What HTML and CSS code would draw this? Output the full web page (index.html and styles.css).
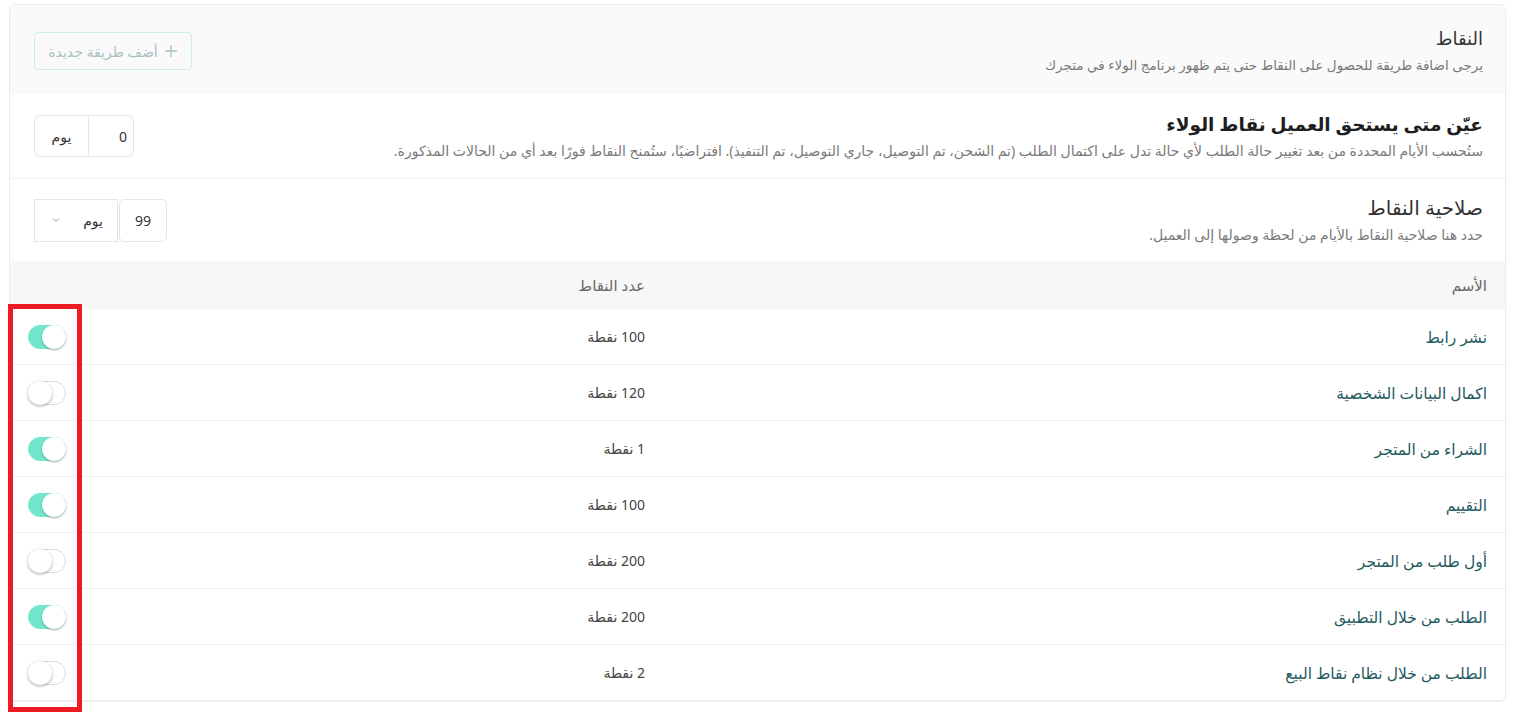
FILE: index.html
```html
<!DOCTYPE html>
<html lang="ar" dir="rtl">
<head>
    <meta charset="UTF-8">
    <title>النقاط</title>

    <link rel="stylesheet" href="styles.css">
</head>
<body>
<div class="card">
    <div class="head">
        <div class="head-text">
            <h2 class="head-title">النقاط</h2>
            <p class="desc">يرجى اضافة طريقة للحصول على النقاط حتى يتم ظهور برنامج الولاء في متجرك</p>
        </div>
        <button class="add-btn">
            <svg width="14" height="14" viewBox="0 0 14 14"><path d="M7 1v12M1 7h12" stroke="currentColor" stroke-width="1.3" fill="none"/></svg>
            أضف طريقة جديدة
        </button>
    </div>

    <div class="section">
        <div class="section-text">
            <h3 class="section-title bold">عيّن متى يستحق العميل نقاط الولاء</h3>
            <p class="desc">ستُحسب الأيام المحددة من بعد تغيير حالة الطلب لأي حالة تدل على اكتمال الطلب (تم الشحن، تم التوصيل، جاري التوصيل، تم التنفيذ). افتراضيًا، ستُمنح النقاط فورًا بعد أي من الحالات المذكورة.</p>
        </div>
        <div class="field">
            <input class="field-input" type="text" value="0">
            <span class="field-addon">يوم</span>
        </div>
    </div>

    <div class="section">
        <div class="section-text">
            <h3 class="section-title">صلاحية النقاط</h3>
            <p class="desc">حدد هنا صلاحية النقاط بالأيام من لحظة وصولها إلى العميل.</p>
        </div>
        <div class="field split">
            <input class="field-input num" type="text" value="99">
            <span class="field-select">
                يوم
                <svg width="10" height="10" viewBox="0 0 10 10"><path d="M2 3.5l3 3 3-3" stroke="#999" stroke-width="1" fill="none"/></svg>
            </span>
        </div>
    </div>

    <div class="table">
        <div class="row th">
            <div class="cell">الأسم</div>
            <div class="cell">عدد النقاط</div>
            <div class="cell"></div>
        </div>
        <div class="row">
            <div class="cell name">نشر رابط</div>
            <div class="cell">100 نقطة</div>
            <div class="cell act"><span class="toggle on"></span></div>
        </div>
        <div class="row">
            <div class="cell name">اكمال البيانات الشخصية</div>
            <div class="cell">120 نقطة</div>
            <div class="cell act"><span class="toggle"></span></div>
        </div>
        <div class="row">
            <div class="cell name">الشراء من المتجر</div>
            <div class="cell">1 نقطة</div>
            <div class="cell act"><span class="toggle on"></span></div>
        </div>
        <div class="row">
            <div class="cell name">التقييم</div>
            <div class="cell">100 نقطة</div>
            <div class="cell act"><span class="toggle on"></span></div>
        </div>
        <div class="row">
            <div class="cell name">أول طلب من المتجر</div>
            <div class="cell">200 نقطة</div>
            <div class="cell act"><span class="toggle"></span></div>
        </div>
        <div class="row">
            <div class="cell name">الطلب من خلال التطبيق</div>
            <div class="cell">200 نقطة</div>
            <div class="cell act"><span class="toggle on"></span></div>
        </div>
        <div class="row">
            <div class="cell name">الطلب من خلال نظام نقاط البيع</div>
            <div class="cell">2 نقطة</div>
            <div class="cell act"><span class="toggle"></span></div>
        </div>
    </div>
</div>

<!-- red marker round the toggle column -->
<div class="mark"></div>

</body>
</html>
```

FILE: styles.css
```css
* {
    margin: 0;
    padding: 0;
    box-sizing: border-box;
}

body {
    font-family: "Noto Sans", "DejaVu Sans", sans-serif;
    background: #ffffff;
    color: #333;
    position: relative;
    min-height: 716px;
}

.card {
    margin: 4px 22px 0 9px;
    border: 1px solid #ececec;
    border-radius: 6px;
    overflow: hidden;
}

.head {
    background: #fafafa;
    height: 89px;
    padding: 0 22px 0 24px;
    display: flex;
    align-items: center;
    justify-content: space-between;
}

.head-title {
    font-size: 18px;
    font-weight: 500;
    color: #333;
    line-height: 26px;
}

.desc {
    font-size: 14px;
    color: #7a7a7a;
    line-height: 20px;
    margin-top: 4px;
}

.head .desc {
    font-size: 13.5px;
}

.add-btn {
    display: flex;
    align-items: center;
    gap: 6px;
    height: 38px;
    width: 158px;
    justify-content: center;
    font: inherit;
    font-size: 14px;
    color: #a9bfc3;
    background: transparent;
    border: 1px solid #c8f0e6;
    border-radius: 4px;
    margin-top: 3px;
}

.section {
    height: 85px;
    padding: 0 22px 0 24px;
    display: flex;
    align-items: center;
    justify-content: space-between;
    border-bottom: 1px solid #f2f2f2;
}

.section + .section {
    height: 82px;
    border-bottom: 0;
}

.section-title {
    font-size: 20px;
    font-weight: 500;
    color: #333;
    line-height: 26px;
}

.section-title.bold {
    font-size: 18.5px;
    color: #1e1e1e;
    font-weight: 600;
}

.field {
    display: flex;
    height: 42px;
    border: 1px solid #e6e6e6;
    border-radius: 6px;
}

.field-input {
    width: 45px;
    border: 0;
    border-left: 1px solid #e6e6e6;
    font: inherit;
    font-size: 14px;
    color: #333;
    padding: 0 6px;
    background: transparent;
    text-align: right;
    outline: none;
}

.field-addon {
    width: 53px;
    display: flex;
    align-items: center;
    justify-content: center;
    font-size: 14px;
    color: #333;
}

.field.split {
    border: 0;
    gap: 1px;
    height: 43px;
}

.field.split .field-input {
    width: 48px;
    border: 1px solid #e6e6e6;
    border-radius: 5px;
    text-align: center;
}

.field-select {
    width: 84px;
    display: flex;
    align-items: center;
    justify-content: space-between;
    padding: 0 14px 0 16px;
    border: 1px solid #e6e6e6;
    font-size: 14px;
    color: #333;
}

.table {
    font-size: 14px;
}

.row {
    display: grid;
    grid-template-columns: 842px 1fr 90px;
    height: 56px;
    align-items: center;
    border-bottom: 1px solid #f1f1f1;
    color: #444;
}

.row.th {
    height: 48px;
    background: #f7f7f7;
    color: #666;
    border-bottom: 0;
    font-size: 15px;
}

.cell {
    padding: 0 18px;
}

.cell.name {
    color: #1f5a5f;
    font-size: 15.5px;
}

.cell.act {
    display: flex;
    justify-content: flex-end;
}

.toggle {
    display: block;
    width: 38px;
    height: 24px;
    border-radius: 12px;
    border: 1px solid #dcdcdc;
    background: #fff;
    position: relative;
}

.toggle::after {
    content: "";
    position: absolute;
    top: -1px;
    left: -1px;
    width: 24px;
    height: 24px;
    border-radius: 50%;
    background: #fff;
    box-shadow: 0 1px 3px rgba(0, 0, 0, 0.35);
}

.toggle.on {
    background: #72e6cb;
    border-color: #72e6cb;
}

.toggle.on::after {
    left: auto;
    right: -1px;
    box-shadow: 0 1px 2px rgba(0, 80, 60, 0.45);
}

.mark {
    position: absolute;
    left: 8px;
    top: 304px;
    width: 74px;
    height: 408px;
    border: 5px solid #ed1c24;
}
```
